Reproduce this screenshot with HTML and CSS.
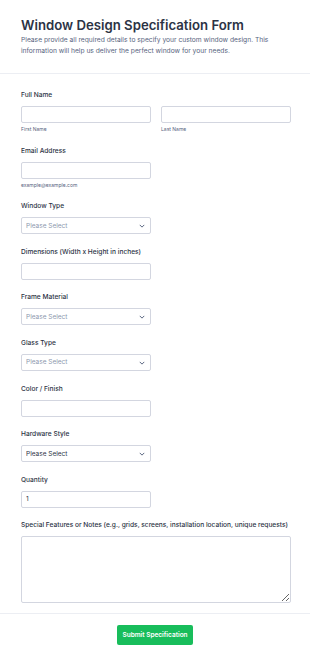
FILE: index.html
```html
<!DOCTYPE html>
<html>
<head>
	<meta charset="utf-8">
	<title>Window Design Specification Form</title>
	<link rel="stylesheet" href="styles.css">
</head>
<body>
	<div class="form-head">
		<h1>Window Design Specification Form</h1>
		<p>Please provide all required details to specify your custom window design. This information will help us deliver the perfect window for your needs.</p>
	</div>

	<form class="form-body" action="">
		<div class="field">
			<label>Full Name</label>
			<div class="name-row">
				<div class="name-col">
					<input type="text">
					<span class="sub">First Name</span>
				</div>
				<div class="name-col">
					<input type="text">
					<span class="sub">Last Name</span>
				</div>
			</div>
		</div>

		<div class="field">
			<label>Email Address</label>
			<input type="email" class="half">
			<span class="sub">example@example.com</span>
		</div>

		<div class="field">
			<label>Window Type</label>
			<div class="select-wrap">
				<select class="empty"><option>Please Select</option></select>
				<svg class="chev" viewBox="0 0 8 5" width="6" height="4"><path d="M1 1l3 3 3-3" fill="none" stroke="#57647e" stroke-width="1.3"/></svg>
			</div>
		</div>

		<div class="field">
			<label>Dimensions (Width x Height in inches)</label>
			<input type="text" class="half">
		</div>

		<div class="field">
			<label>Frame Material</label>
			<div class="select-wrap">
				<select class="empty"><option>Please Select</option></select>
				<svg class="chev" viewBox="0 0 8 5" width="6" height="4"><path d="M1 1l3 3 3-3" fill="none" stroke="#57647e" stroke-width="1.3"/></svg>
			</div>
		</div>

		<div class="field">
			<label>Glass Type</label>
			<div class="select-wrap">
				<select class="empty"><option>Please Select</option></select>
				<svg class="chev" viewBox="0 0 8 5" width="6" height="4"><path d="M1 1l3 3 3-3" fill="none" stroke="#57647e" stroke-width="1.3"/></svg>
			</div>
		</div>

		<div class="field">
			<label>Color / Finish</label>
			<input type="text" class="half">
		</div>

		<div class="field">
			<label>Hardware Style</label>
			<div class="select-wrap">
				<select><option>Please Select</option></select>
				<svg class="chev" viewBox="0 0 8 5" width="6" height="4"><path d="M1 1l3 3 3-3" fill="none" stroke="#57647e" stroke-width="1.3"/></svg>
			</div>
		</div>

		<div class="field">
			<label>Quantity</label>
			<input type="text" class="half" value="1">
		</div>

		<div class="field last">
			<label>Special Features or Notes (e.g., grids, screens, installation location, unique requests)</label>
			<textarea></textarea>
		</div>

		<div class="form-foot">
			<button type="button">Submit Specification</button>
		</div>
	</form>
</body>
</html>
```

FILE: styles.css
```css
body {
	margin: 0;
	background: #fff;
	font-family: Inter, "Noto Sans", sans-serif;
	color: #2c3345;
}

h1, p, form, button { margin: 0; padding: 0; border: 0; }

/* ----------- header ----------- */
.form-head {
	padding: 16px 21px 16px;
	border-bottom: 1px solid #eceef3;
}

.form-head h1 {
	font-size: 13.2px;
	line-height: 18px;
	font-weight: 600;
	color: #2c3345;
}

.form-head p {
	margin-top: 1px;
	font-size: 6.7px;
	line-height: 11px;
	color: #57647e;
	padding-right: 20px;
}

/* ----------- fields ----------- */
.form-body {
	padding-top: 16px;
}

.field {
	padding: 0 19px 0 21px;
	margin-bottom: 12.6px;
}

.field.last {
	margin-bottom: 0;
}

.field label {
	display: block;
	font-size: 6.6px;
	line-height: 10px;
	font-weight: 500;
	color: #2c3345;
	margin-bottom: 6px;
}

.name-row {
	display: flex;
	gap: 10px;
}

.name-col {
	flex: 1;
}

.sub {
	display: block;
	font-size: 5px;
	line-height: 7px;
	color: #57647e;
	margin-top: 3px;
}

input, select, textarea {
	display: block;
	box-sizing: border-box;
	width: 100%;
	height: 17px;
	border: 1px solid #d3d6e0;
	border-radius: 2px;
	background: #fff;
	font-family: Inter, "Noto Sans", sans-serif;
	font-size: 6.5px;
	color: #2c3345;
	padding: 0 4px;
	margin: 0;
	outline: none;
}

.half {
	width: 130px;
}

.select-wrap {
	position: relative;
	width: 130px;
}

select {
	appearance: none;
	-webkit-appearance: none;
}

select.empty {
	color: #8d98ad;
}

.chev {
	position: absolute;
	right: 6px;
	top: 7px;
}

textarea {
	height: 67px;
	resize: vertical;
}

/* ----------- footer ----------- */
.form-foot {
	display: flex;
	justify-content: center;
	border-top: 1px solid #eceef3;
	margin-top: 10px;
	padding: 11px 0 17px;
}

.form-foot button {
	width: 76px;
	height: 20px;
	background: #18bd5b;
	border-radius: 2px;
	color: #fff;
	font-family: Inter, "Noto Sans", sans-serif;
	font-size: 6.5px;
	font-weight: 600;
}
```
